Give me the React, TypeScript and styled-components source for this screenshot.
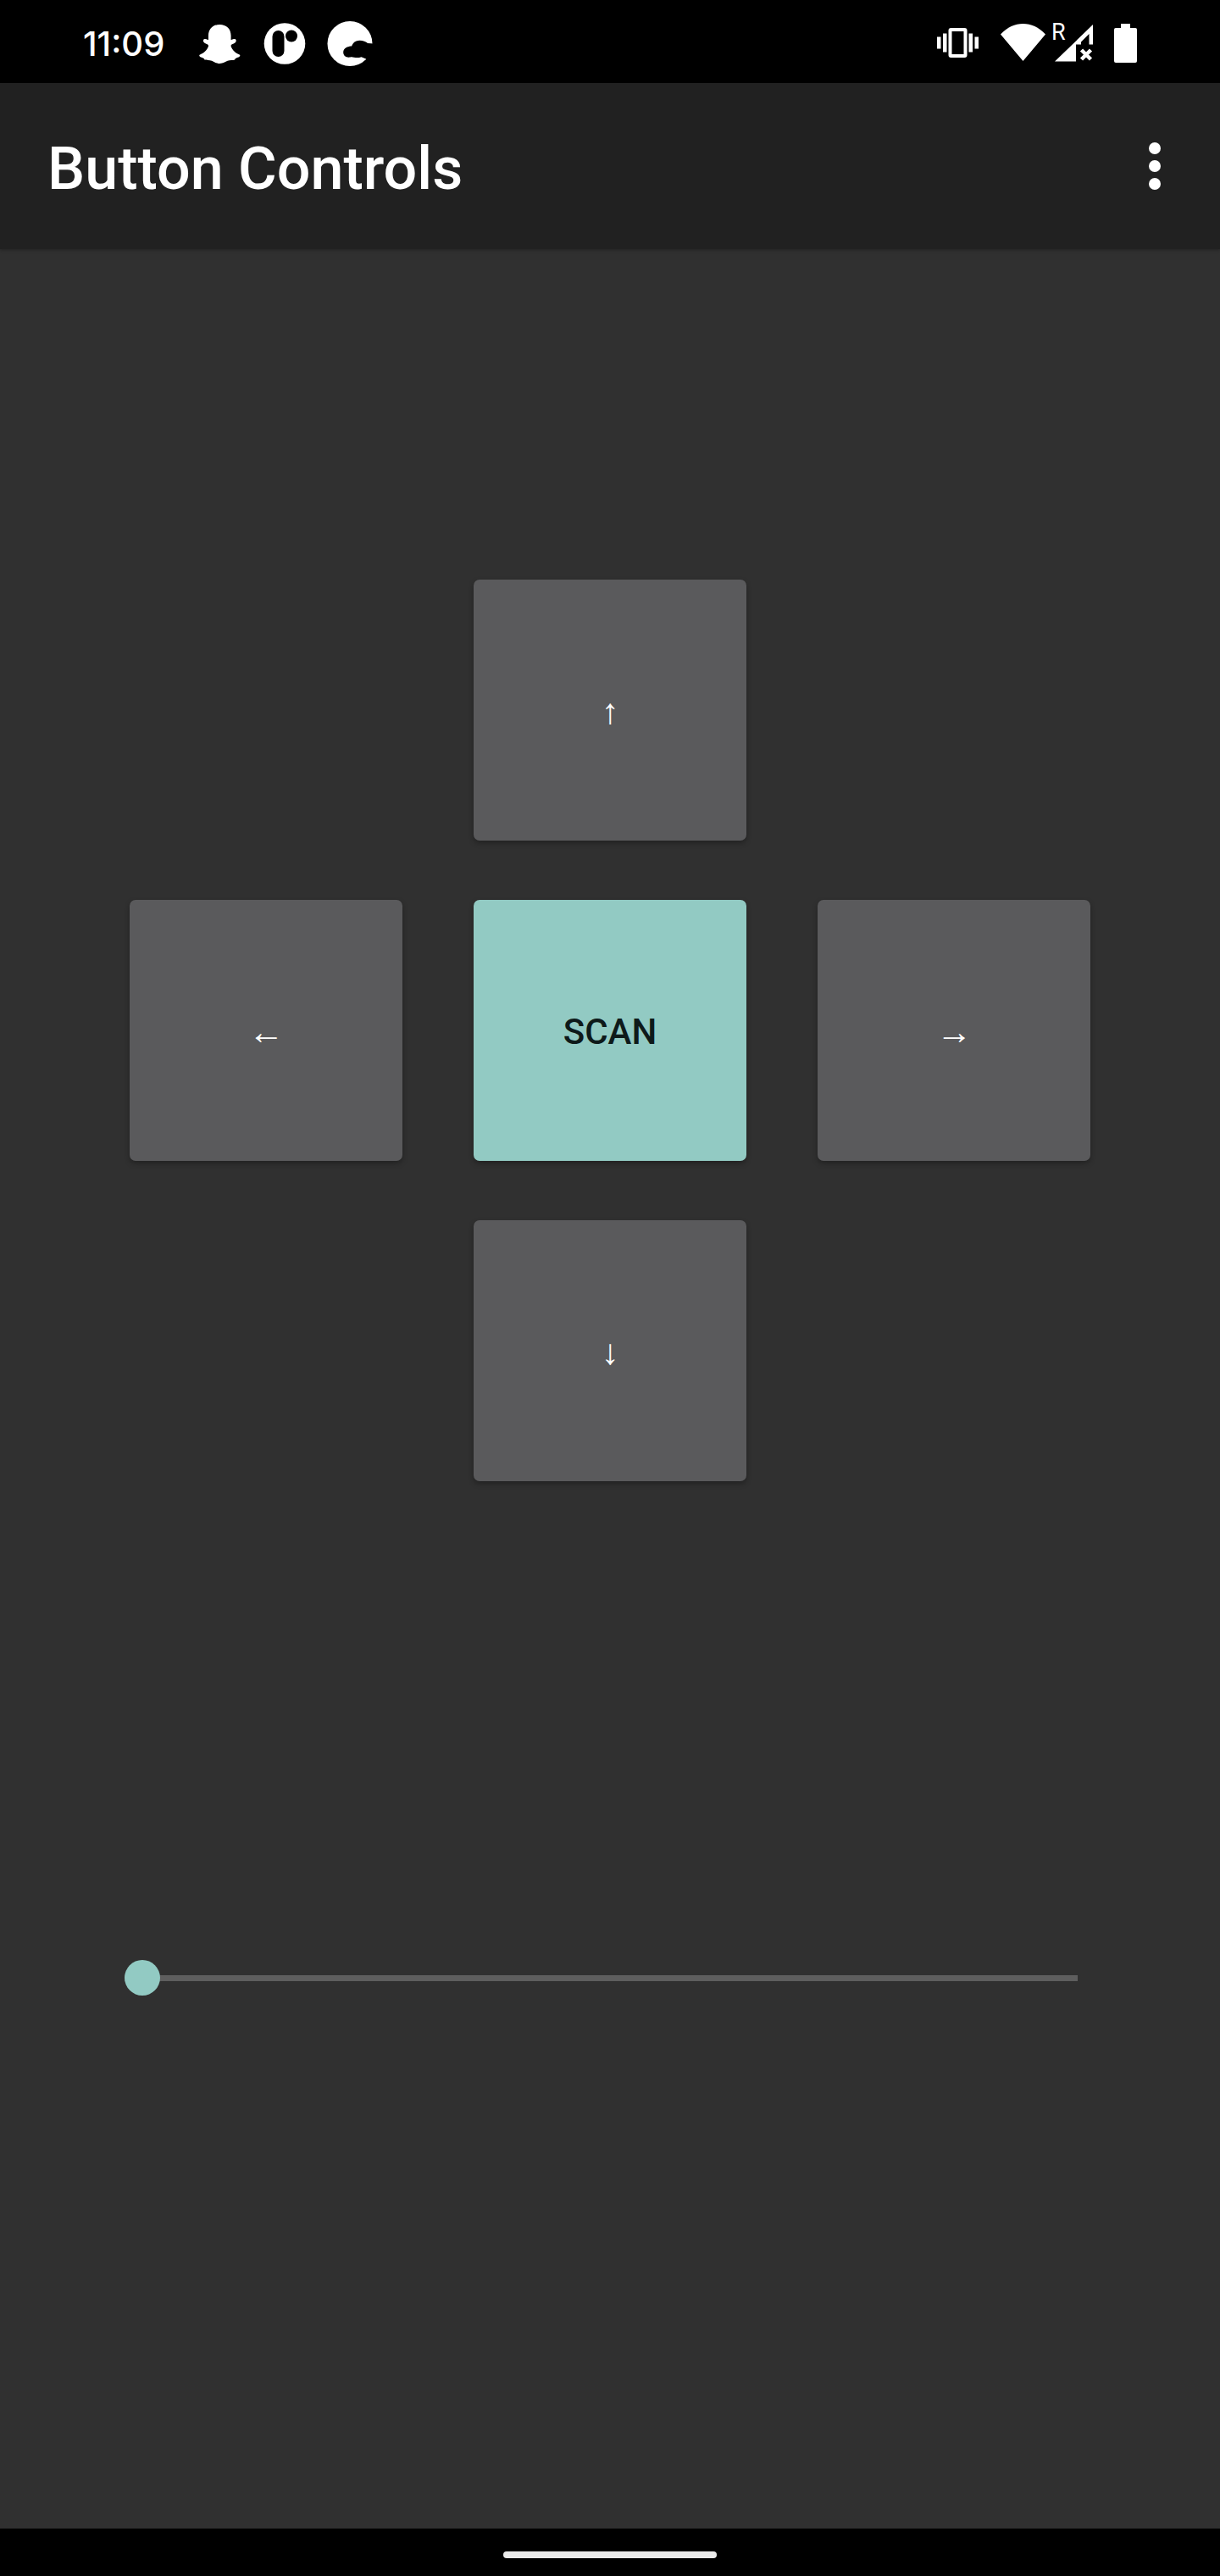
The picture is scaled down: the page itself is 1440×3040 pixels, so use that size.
import React, { useState } from "react";
import styled, { createGlobalStyle } from "styled-components";

const GlobalStyle = createGlobalStyle`
  *, *::before, *::after { box-sizing: border-box; }
  body { margin: 0; background: #303030; font-family: Roboto, sans-serif; }
`;

const Screen = styled.div`
  display: flex;
  flex-direction: column;
  min-height: 100vh;
  background: #303030;
  color: #fff;
`;

const StatusBar = styled.div`
  display: flex;
  align-items: center;
  justify-content: space-between;
  height: 98px;
  padding: 6px 84px 0 98px;
  background: #000;
`;

const StatusGroup = styled.div<{ $gap: number }>`
  display: flex;
  align-items: center;
  gap: ${(p) => p.$gap}px;
`;

const Clock = styled.time`
  width: 112px;
  font-family: Inter, sans-serif;
  font-size: 40px;
  line-height: 48px;
  font-weight: 500;
`;

const StatusIcon = styled.svg`
  display: block;
  width: 54px;
  height: 54px;
  overflow: visible;
  fill: #fff;
`;

const AppBar = styled.header`
  display: flex;
  align-items: center;
  justify-content: space-between;
  height: 196px;
  padding: 0 28px 0 56px;
  background: #212121;
  box-shadow: 0 1px 4px rgba(0, 0, 0, 0.3);
`;

const Title = styled.h1`
  margin: 0;
  padding-top: 6px;
  font-size: 70px;
  line-height: 84px;
  font-weight: 500;
`;

const MenuButton = styled.button`
  display: flex;
  flex-direction: column;
  align-items: center;
  justify-content: center;
  gap: 7px;
  width: 98px;
  height: 98px;
  padding: 0;
  border: 0;
  background: none;
`;

const Dot = styled.span`
  width: 14px;
  height: 14px;
  border-radius: 50%;
  background: #fff;
`;

const Main = styled.main`
  flex: 1;
  padding-top: 390px;
`;

const Pad = styled.div`
  display: grid;
  grid-template-columns: repeat(3, 1fr);
  grid-template-areas: ". up ." "left scan right" ". down .";
  grid-auto-rows: 308px;
  gap: 70px 84px;
  padding: 0 153px;
`;

const PadButton = styled.button<{ $area: string; $accent?: boolean }>`
  grid-area: ${(p) => p.$area};
  padding: 4px 0 0;
  border: 0;
  border-radius: 7px;
  background: ${(p) => (p.$accent ? "#92cac3" : "#5a5a5c")};
  color: ${(p) => (p.$accent ? "#0e1a1a" : "#fff")};
  box-shadow: 0 3px 6px rgba(0, 0, 0, 0.3);
  font-family: Roboto, "Liberation Sans", sans-serif;
  font-size: 42px;
  line-height: 48px;
  font-weight: 500;
`;

const Slider = styled.input`
  appearance: none;
  display: block;
  width: calc(100% - 315px);
  height: 42px;
  margin: 565px 168px 0 147px;
  background: none;

  &::-webkit-slider-runnable-track {
    height: 7px;
    background: #5e5e5e;
  }
  &::-webkit-slider-thumb {
    appearance: none;
    width: 42px;
    height: 42px;
    margin-top: -18px;
    border-radius: 50%;
    background: #92cac3;
  }
`;

const NavBar = styled.nav`
  display: flex;
  justify-content: center;
  height: 56px;
  padding-top: 27px;
  background: #000;
`;

const HomeHandle = styled.button`
  width: 252px;
  height: 8px;
  padding: 0;
  border: 0;
  border-radius: 4px;
  background: #ebebeb;
`;

export default function App() {
  const [speed, setSpeed] = useState(0);

  return (
    <Screen>
      <GlobalStyle />
      <StatusBar>
        <StatusGroup $gap={23}>
          <Clock>11:09</Clock>
          <StatusIcon viewBox="0 0 54 54" aria-label="Snapchat">
            <path d="M26.3 4C18.5 4 13 9 13 17V22C10.5 21.5 8.5 20.5 7.5 21.5C6 23 7.5 25 9 26C11 27.2 13.5 27.5 13 29.5C11.5 34 7.5 38 3.5 39.2C1.5 40 2 41.5 4 42.5C6.5 43.5 8 43.5 8.5 45.5C11 46.5 14 45.5 17 46.8C20 48 22 50 26.3 50C30.6 50 32.6 48 35.6 46.8C38.6 45.5 41.6 46.5 44.1 45.5C44.6 43.5 46.1 43.5 48.6 42.5C50.6 41.5 51.1 40 49.1 39.2C45.1 38 41.1 34 39.6 29.5C39.1 27.5 41.6 27.2 43.6 26C45.1 25 46.6 23 45.1 21.5C44.1 20.5 42.1 21.5 39.6 22V17C39.6 9 34.1 4 26.3 4Z" />
          </StatusIcon>
          <StatusIcon viewBox="0 0 54 54" aria-label="App notification">
            <circle cx="26" cy="26.5" r="24.3" />
            <rect x="11.5" y="11" width="14" height="31" rx="7" fill="#000" />
            <circle cx="34" cy="17.5" r="7" fill="#000" />
          </StatusIcon>
          <StatusIcon viewBox="0 0 54 54" aria-label="Weather notification">
            <circle cx="26" cy="26.5" r="26.5" />
            <path
              fill="#000"
              d="M54 26.5L47 26C44.5 24 38.5 21.5 33.5 23.5C30.5 24.7 29 27 28 29.5C23.5 29.5 18.2 32 18.2 36.5C18.2 41 21.5 43.2 26.5 42.5C29.5 41.5 33.5 44.5 39.5 42.2L45 44.5L54 52Z"
            />
          </StatusIcon>
        </StatusGroup>
        <StatusGroup $gap={23}>
          <StatusIcon viewBox="0 0 54 54" aria-label="Vibrate">
            <rect x="18.5" y="10" width="18" height="31" rx="1" fill="none" stroke="#fff" strokeWidth="4" />
            <path d="M10 14.5h4.5v22H10zM3 18.5h4.500v14H3zM40.500 14.500H45v22h-4.500zM47.500 18.500H52v14h-4.500z" />
          </StatusIcon>
          <StatusGroup $gap={7}>
            <StatusIcon viewBox="0 0 54 54" aria-label="Wi-Fi">
              <path d="M1 15.5C9 7 18 3 27.5 3S46 7 54 15.5L27.5 47Z" />
            </StatusIcon>
            <StatusIcon viewBox="0 0 54 54" aria-label="Roaming, no data">
              <text x="0" y="22" fontFamily="Roboto, sans-serif" fontSize="27">R</text>
              <path d="M4 47.5L49 4V27.5H44.5V15L35 24.5V27.5H29V47.5Z" />
              <path d="M35.5 34L46.5 45M46.5 34L35.5 45" stroke="#fff" strokeWidth="4.5" />
            </StatusIcon>
            <StatusIcon viewBox="0 0 54 54" aria-label="Battery full">
              <rect x="13" y="8" width="27" height="41" rx="2" />
              <rect x="21" y="3" width="11" height="6" />
            </StatusIcon>
          </StatusGroup>
        </StatusGroup>
      </StatusBar>

      <AppBar>
        <Title>Button Controls</Title>
        <MenuButton type="button" aria-label="More options">
          <Dot />
          <Dot />
          <Dot />
        </MenuButton>
      </AppBar>

      <Main>
        <Pad>
          <PadButton type="button" $area="up">↑</PadButton>
          <PadButton type="button" $area="left">←</PadButton>
          <PadButton type="button" $area="scan" $accent>SCAN</PadButton>
          <PadButton type="button" $area="right">→</PadButton>
          <PadButton type="button" $area="down">↓</PadButton>
        </Pad>
        <Slider
          type="range"
          min={0}
          max={100}
          value={speed}
          onChange={(e) => setSpeed(Number(e.target.value))}
          aria-label="Speed"
        />
      </Main>

      <NavBar>
        <HomeHandle type="button" aria-label="Home" />
      </NavBar>
    </Screen>
  );
}
